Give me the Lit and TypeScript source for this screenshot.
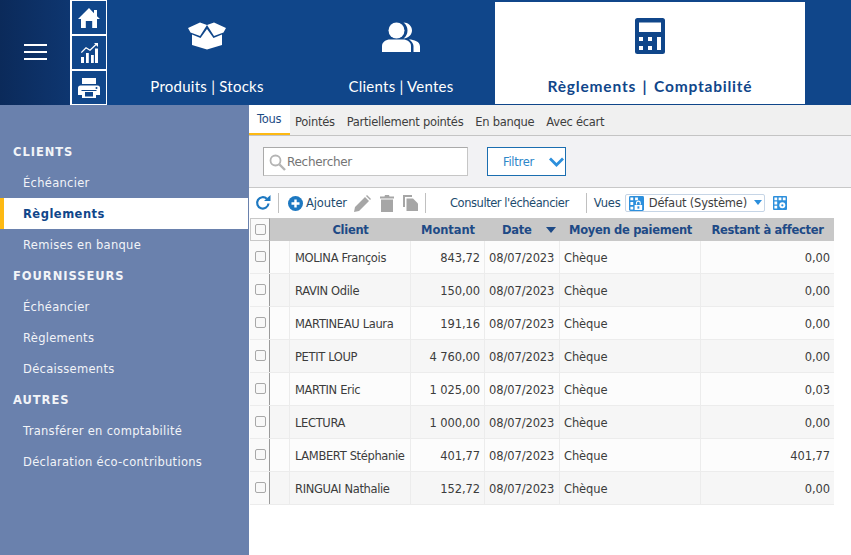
import { LitElement, html, css, svg } from "lit";
import { customElement } from "lit/decorators.js";

const rows = [
  ["MOLINA François", "843,72", "0,00"],
  ["RAVIN Odile", "150,00", "0,00"],
  ["MARTINEAU Laura", "191,16", "0,00"],
  ["PETIT LOUP", "4 760,00", "0,00"],
  ["MARTIN Eric", "1 025,00", "0,03"],
  ["LECTURA", "1 000,00", "0,00"],
  ["LAMBERT Stéphanie", "401,77", "401,77"],
  ["RINGUAI Nathalie", "152,72", "0,00"],
];

const icon = (w: number, h: number, vb: string, body: unknown) =>
  html`<svg width=${w} height=${h} viewBox=${vb} aria-hidden="true">${body}</svg>`;

const home = svg`<path fill="#fff" d="M11 0 0 11h3v9h4.800v-7h6.400v7H19v-9h3l-3-2.800V2h-3v3.300z"/>`;
const chart = svg`<path fill="none" stroke="#fff" stroke-width="1.300" d="M.3 9.500 5 4.800l4 2.500L15 1.500"/><path fill="#fff" d="M13 0h4v4zM0 14h3v6H0zM5 10h2.800v10H5zM10 12h2.800v8H10zM14 5.500h3V20h-3z"/>`;
const printer = svg`<path fill="#fff" d="M4 0h14v6H4zM2.500 7.500h17A2.500 2.500 0 0 1 22 10v7h-4v3H4v-3H0v-7a2.500 2.500 0 0 1 2.500-2.500z"/><rect x="7" y="14" width="8" height="4.500" fill="#10468a"/><rect x="3.500" y="12" width="15" height="1" fill="#10468a"/><circle cx="18.500" cy="10" r="1" fill="#10468a"/>`;
const box = svg`<path fill="#fff" d="M0 6 12 .5 19 3 12 14 2.500 10.500zM38 6 26 .5 19 3l7 11 9.500-3.500z"/><path fill="#fff" d="M4 12.500 12.500 16 19 7l6.500 9L34 12.500V23L19 27.500 4 23z"/>`;
const users = svg`<circle cx="14.500" cy="8.500" r="8" fill="#fff"/><path fill="#fff" d="M0 30v-6c0-4 4-6.500 8-6.500h13c4 0 8 2.500 8 6.500v6z"/><path fill="#fff" d="M21.500 .5C26 .5 30 4 30 8.500S26 16 21.500 16.500C24 14.500 25.500 12 25.500 8.500S24 2.500 21.500 .5zM27 17.500c5 0 11 2 11 7V30h-6.500v-6c0-2.500-2-5-4.500-6.500z"/>`;
const calc = svg`<path fill="#10468a" fill-rule="evenodd" d="M2.500 0h25A2.500 2.500 0 0 1 30 2.500v31a2.500 2.500 0 0 1-2.500 2.500h-25A2.500 2.500 0 0 1 0 33.500v-31A2.500 2.500 0 0 1 2.500 0zM4 4.500v9.500h22V4.500zM4 19v4h4v-4zm9 0v4h4v-4zM22 19v13h4V19zM4 28v4h4v-4zm9 0v4h4v-4z"/>`;
const gridLock = svg`<rect width="16" height="16" rx="1.500" fill="#2c8fdc"/><path fill="#fff" d="M1.500 1.500h3v3h-3zM6.500 1.500h3v3h-3zM1.500 6.500h3v3h-3zM1.500 11.500h3v3h-3zM6 9.500h8V15H6z"/><path fill="none" stroke="#fff" stroke-width="1.200" d="M8 9V7.500a2 2 0 0 1 4 0V9"/><rect x="9" y="11" width="2" height="2.500" fill="#2c8fdc"/>`;
const gridGear = svg`<rect width="15" height="15" rx="1" fill="#2c8fdc"/><path fill="#fff" d="M1.500 1.500h3v3h-3zM6 1.500h3v3H6zM10.500 1.500h3v3h-3zM1.500 6h3v3h-3zM1.500 10.500h3v3h-3z"/><circle cx="10" cy="10" r="3.200" fill="#fff"/><circle cx="10" cy="10" r="1.200" fill="#2c8fdc"/>`;

@customElement("app-root")
export class AppRoot extends LitElement {
  static styles = css`
    :host { display: block; width: 851px; height: 555px; overflow: hidden; background: #fff; font-family: "DejaVu Sans", sans-serif; font-size: 11px; color: #3c3c3c; }
    * { box-sizing: border-box; }
    .hdr { height: 105px; display: flex; background: #10468a; }
    .burger { width: 70px; background: linear-gradient(90deg, #0b2a5a, #0e3670); display: flex; flex-direction: column; justify-content: center; align-items: center; gap: 5px; padding-bottom: 2px; }
    .burger i { display: block; width: 23px; height: 2px; background: #fff; }
    .quick { width: 37px; height: 105px; display: flex; flex-direction: column; border-left: 2px solid #fff; border-right: 1px solid #fff; border-top: 1px solid #fff; border-bottom: 1px solid #fff; background: #fff; gap: 2px; }
    .quick div { flex: 1; background: #10468a; display: flex; align-items: center; justify-content: center; }
    .tabs { display: flex; flex: 1; padding-top: 2px; }
    .tab { display: flex; flex-direction: column; align-items: center; color: #fff; font-family: Lato, sans-serif; font-size: 15px; height: 102px; letter-spacing: .25px; }
    .tab .ic { height: 58px; display: flex; align-items: flex-end; padding-bottom: 10px; }
    .tab .lb { margin-top: 17px; }
    .t1 { width: 200px; } .t2 { width: 188px; }
    .t2 .ic { padding-bottom: 8px; }
    .tab.on { width: 310px; background: #fff; color: #10468a; font-weight: 700; letter-spacing: .8px; word-spacing: 2px; font-size: 15.500px; }
    .tab.on .ic { padding-bottom: 6px; }
    .body { display: flex; height: 450px; }
    .side { width: 249px; background: #6a81ad; padding: 31px 0 0; color: #f2f4f8; }
    .side .s, .side .i { height: 31px; display: flex; align-items: center; }
    .side .s { padding-left: 13px; font-weight: 700; font-size: 11.500px; letter-spacing: .95px; }
    .side .i { padding-left: 23px; font-size: 11.500px; letter-spacing: .3px; }
    .side .i.on { background: #fff; color: #10468a; font-weight: 700; border-left: 4px solid #fdb913; padding-left: 19px; margin-right: 1px; letter-spacing: .5px; }
    .main { flex: 1; min-width: 0; }
    .subt { height: 31px; background: #f0f0f0; display: flex; align-items: stretch; border-bottom: 1px solid #c4c4c4; font-size: 11.500px; letter-spacing: -.28px; color: #3e3e3e; }
    .subt span { padding: 3px 5px 0 6px; display: flex; align-items: center; height: 30px; }
    .subt .first { padding-left: 5px; padding-right: 6px; }
    .subt .third { padding-right: 6px; }
    .subt .on { width: 41px; padding: 0 0 0 8px; background: #fff; border-bottom: 2px solid #fdb913; color: #1d4b84; }
    .find { height: 52px; background: #f2f2f4; border-bottom: 1px solid #c8c8c8; display: flex; align-items: center; padding: 0 0 0 14px; gap: 19px; }
    .sbox { width: 205px; height: 29px; background: #fff; border: 1px solid #c6c6c6; border-left-color: #aaa; border-top-color: #aaa; display: flex; align-items: center; padding: 1px 0 0 5px; gap: 1px; color: #757575; font-size: 12px; letter-spacing: -.3px; }
    .filt { width: 79px; height: 29px; border: 1px solid #1b6eb0; background: #fff; color: #2d87c9; display: flex; align-items: center; padding-left: 15px; justify-content: space-between; padding-right: 1px; font-size: 11.500px; letter-spacing: -.3px; }
    .bar { height: 30px; display: flex; align-items: center; padding-left: 6px; color: #1d4b6e; font-size: 11.500px; letter-spacing: -.45px; }
    .bar .add { margin: 0 7px 0 3px; letter-spacing: -.1px; }
    .bar .vues { letter-spacing: -.1px; }
    .gap { width: 9px; }
    .sep { width: 1px; height: 20px; background: #c0c0c0; }
    .sep1 { margin: 0 9px 0 7px; }
    .sep2 { margin: 0 24px 0 7px; }
    .sep3 { margin: 0 7px 0 17px; }
    .combo { width: 140px; height: 18px; border: 1px solid #c6d5e6; border-radius: 2px; display: flex; align-items: center; margin: 0 8px 0 4px; color: #3e3e3e; padding-left: 3px; position: relative; letter-spacing: -.2px; }
    .combo b { font-weight: 400; margin-left: 5px; }
    .combo i { position: absolute; right: 2px; top: 5px; border: 4px solid transparent; border-top: 5px solid #2c8fdc; }
    .row { display: grid; grid-template-columns: 20px 20px 121px 74px 75px 141px 133px; width: 584px; margin-left: 1px; }
    .head { height: 23px; background: #c8c8c8; font-weight: 700; color: #1e4a86; font-size: 11.500px; letter-spacing: -.3px; }
    .head > div { display: flex; align-items: center; justify-content: center; height: 23px; }
    .head .c0 { background: #fafafa; border: 1px solid #c8c8c8; border-right: 1px solid #9a9a9a; padding-left: 1px; }
    .head .hc { grid-column: 2 / 4; padding-left: 20px; }
    .head .mt { letter-spacing: -.1px; }
    .head .dt { justify-content: flex-start; padding-left: 17px; gap: 15px; }
    .dr { height: 33px; border-bottom: 1px solid #ececec; color: #3c3c3c; font-size: 11.500px; letter-spacing: -.1px; background: #fcfcfc; }
    .dr:nth-child(even) { background: #f6f6f6; }
    .dr > div { display: flex; align-items: center; padding-top: 1px; border-right: 1px solid #ececec; padding-left: 4px; white-space: nowrap; min-width: 0; }
    .dr > .nm { padding-left: 5px; letter-spacing: -.35px; }
    .dr > .c0 { padding: 0 0 2px 5px; border-right: 1px solid #9a9a9a; background: #fafafa; }
    .dr > .r { justify-content: flex-end; padding: 1px 4px 0 0; }
    .dr > .last { border-right: none; }
    .cb { display: block; width: 11px; height: 11px; border: 1.500px solid #a8a8a8; border-radius: 2px; background: #f8f8f8; }
  `;

  render() {
    return html`
      <div class="hdr">
        <div class="burger"><i></i><i></i><i></i></div>
        <div class="quick">
          <div>${icon(22, 20, "0 0 22 20", home)}</div>
          <div>${icon(17, 20, "0 0 17 20", chart)}</div>
          <div>${icon(22, 20, "0 0 22 20", printer)}</div>
        </div>
        <div class="tabs">
          <div class="tab t1"><div class="ic">${icon(38, 28, "0 0 38 28", box)}</div><div class="lb">Produits | Stocks</div></div>
          <div class="tab t2"><div class="ic">${icon(38, 30, "0 0 38 30", users)}</div><div class="lb">Clients | Ventes</div></div>
          <div class="tab on"><div class="ic">${icon(30, 36, "0 0 30 36", calc)}</div><div class="lb">Règlements | Comptabilité</div></div>
        </div>
      </div>
      <div class="body">
        <div class="side">
          <div class="s">CLIENTS</div>
          <div class="i">Échéancier</div>
          <div class="i on">Règlements</div>
          <div class="i">Remises en banque</div>
          <div class="s">FOURNISSEURS</div>
          <div class="i">Échéancier</div>
          <div class="i">Règlements</div>
          <div class="i">Décaissements</div>
          <div class="s">AUTRES</div>
          <div class="i">Transférer en comptabilité</div>
          <div class="i">Déclaration éco-contributions</div>
        </div>
        <div class="main">
          <div class="subt">
            <span class="on">Tous</span><span class="first">Pointés</span><span class="third">Partiellement pointés</span><span class="third">En banque</span><span>Avec écart</span>
          </div>
          <div class="find">
            <div class="sbox">
              ${icon(17, 17, "0 0 17 17", svg`<circle cx="6.500" cy="6.500" r="5" fill="none" stroke="#b4b4b4" stroke-width="1.800"/><path d="M10.500 10.500 16 16" stroke="#b4b4b4" stroke-width="2.400"/>`)}
              Rechercher
            </div>
            <div class="filt">Filtrer ${icon(15, 10, "0 0 15 10", svg`<path d="M1 1.500 7.500 8 14 1.500" fill="none" stroke="#2c8fdc" stroke-width="2.800"/>`)}</div>
          </div>
          <div class="bar">
            ${icon(16, 16, "0 0 16 16", svg`<path d="M13.500 8.500A5.700 5.700 0 1 1 11.800 3.800" fill="none" stroke="#1d78c1" stroke-width="2.200"/><path d="M9 6h6.500V0z" fill="#1d78c1"/>`)}
            <div class="sep sep1"></div>
            ${icon(15, 15, "0 0 15 15", svg`<circle cx="7.500" cy="7.500" r="7.500" fill="#1d78c1"/><path d="M6.300 3.500h2.400v2.800h2.800v2.400H8.700v2.800H6.300V8.700H3.500V6.300h2.800z" fill="#fff"/>`)}
            <span class="add">Ajouter</span>
            ${icon(17, 17, "0 0 17 17", svg`<path d="M0 17l1-5L11 2l4 4L5 16zM12 1l1-1 4 4-1 1z" fill="#a6a6a6"/>`)}
            <span class="gap"></span>
            ${icon(14, 17, "0 0 14 17", svg`<path d="M1 4.500h12V17H1zM0 1.500h4.500L5 0h4l.5 1.500H14v2H0z" fill="#a6a6a6"/>`)}
            <span class="gap"></span>
            ${icon(15, 16, "0 0 15 16", svg`<path d="M0 0h9v2H2v10H0z" fill="#a6a6a6"/><path d="M3.500 3.500h6.500l5 5V16H3.500z" fill="#a6a6a6"/>`)}
            <div class="sep sep2"></div>
            <span>Consulter l'échéancier</span>
            <div class="sep sep3"></div>
            <span class="vues">Vues</span>
            <div class="combo">${icon(15, 15, "0 0 16 16", gridLock)}<b>Défaut (Système)</b><i></i></div>
            ${icon(14, 14, "0 0 15 15", gridGear)}
          </div>
          <div class="row head">
            <div class="c0"><span class="cb"></span></div>
            <div class="hc">Client</div>
            <div class="mt">Montant</div>
            <div class="dt">Date${icon(10, 6, "0 0 10 6", svg`<path d="M0 0h10L5 6z" fill="#1e4a86"/>`)}</div>
            <div>Moyen de paiement</div>
            <div>Restant à affecter</div>
          </div>
          ${rows.map(
            (r) => html`<div class="row dr">
              <div class="c0"><span class="cb"></span></div>
              <div></div>
              <div class="nm">${r[0]}</div>
              <div class="r">${r[1]}</div>
              <div>08/07/2023</div>
              <div>Chèque</div>
              <div class="r last">${r[2]}</div>
            </div>`
          )}
        </div>
      </div>
    `;
  }
}
